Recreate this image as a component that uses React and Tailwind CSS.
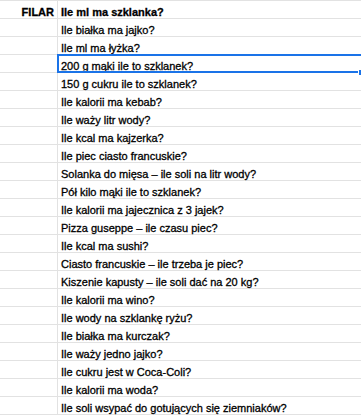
const rows = [
  "Ile białka ma jajko?",
  "Ile ml ma łyżka?",
  "200 g mąki ile to szklanek?",
  "150 g cukru ile to szklanek?",
  "Ile kalorii ma kebab?",
  "Ile waży litr wody?",
  "Ile kcal ma kajzerka?",
  "Ile piec ciasto francuskie?",
  "Solanka do mięsa – ile soli na litr wody?",
  "Pół kilo mąki ile to szklanek?",
  "Ile kalorii ma jajecznica z 3 jajek?",
  "Pizza guseppe – ile czasu piec?",
  "Ile kcal ma sushi?",
  "Ciasto francuskie – ile trzeba je piec?",
  "Kiszenie kapusty – ile soli dać na 20 kg?",
  "Ile kalorii ma wino?",
  "Ile wody na szklankę ryżu?",
  "Ile białka ma kurczak?",
  "Ile waży jedno jajko?",
  "Ile cukru jest w Coca-Coli?",
  "Ile kalorii ma woda?",
  "Ile soli wsypać do gotujących się ziemniaków?",
]

function Row({ label, text, bold, selected }) {
  return (
    <div className="flex h-[18px] border-b border-[#e2e2e2]">
      <div className={`w-[58px] shrink-0 border-r border-[#e2e2e2] pr-[3px] pt-[3px] text-right leading-[17px] ${bold ? "font-bold" : ""}`}>
        {label}
      </div>
      <div className={`relative flex-1 pl-[3px] pt-[3px] leading-[17px] whitespace-nowrap ${bold ? "font-bold" : ""}`}>
        {text}
        {selected && (
          <>
            <div className="absolute left-[-1px] top-[-1px] right-[-6px] bottom-[-1px] border-2 border-[#1a73e8]"></div>
            <div className="absolute right-[-4px] bottom-[-4px] w-[7px] h-[7px] bg-[#1a73e8] border border-white"></div>
          </>
        )}
      </div>
    </div>
  )
}

export default function App() {
  return (
    <div
      className="w-[361px] h-[416px] overflow-hidden bg-white text-black text-[11px] border-t border-[#e2e2e2] [-webkit-text-stroke:0.3px_#000]"
      style={{ fontFamily: '"Liberation Sans", Arial, sans-serif' }}
    >
      <Row label="FILAR" text="Ile ml ma szklanka?" bold />
      {rows.map((r, i) => (
        <Row key={i} text={r} selected={i === 2} />
      ))}
    </div>
  )
}
